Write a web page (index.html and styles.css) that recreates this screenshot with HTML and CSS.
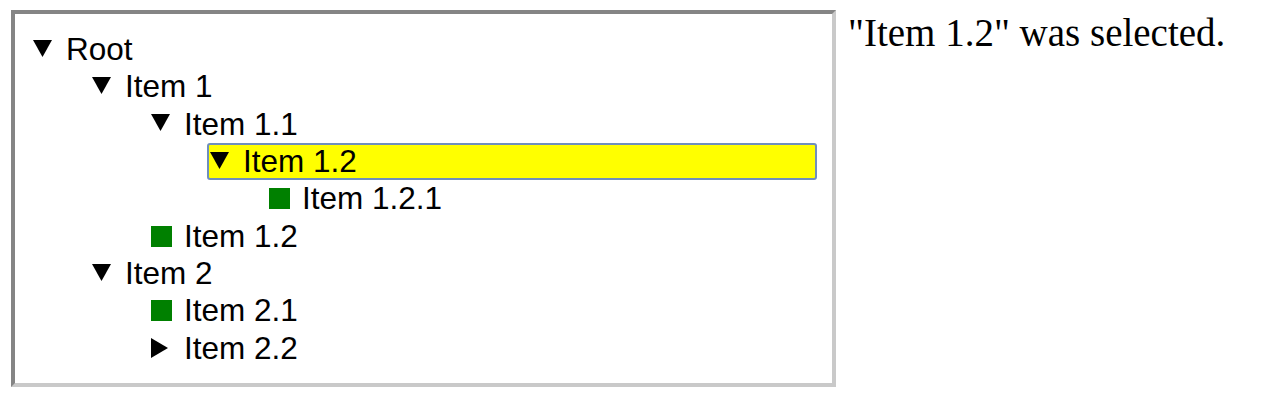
FILE: index.html
```html
<!DOCTYPE html>
<html>
<head>
<meta charset="utf-8">
<link rel="stylesheet" href="styles.css">
</head>
<body>
<div class="page">
  <div class="tree">
    <div class="row l0"><span class="icon"><svg class="down" width="19" height="17" viewBox="0 0 19 17"><polygon points="0,0 19,0 9.5,17"/></svg></span><span class="label">Root</span></div>
    <div class="row l1"><span class="icon"><svg class="down" width="19" height="17" viewBox="0 0 19 17"><polygon points="0,0 19,0 9.5,17"/></svg></span><span class="label">Item 1</span></div>
    <div class="row l2"><span class="icon"><svg class="down" width="19" height="17" viewBox="0 0 19 17"><polygon points="0,0 19,0 9.5,17"/></svg></span><span class="label">Item 1.1</span></div>
    <div class="row l3 selected"><span class="icon"><svg class="down" width="19" height="17" viewBox="0 0 19 17"><polygon points="0,0 19,0 9.5,17"/></svg></span><span class="label">Item 1.2</span></div>
    <div class="row l4"><span class="icon"><span class="leaf"></span></span><span class="label">Item 1.2.1</span></div>
    <div class="row l2"><span class="icon"><span class="leaf"></span></span><span class="label">Item 1.2</span></div>
    <div class="row l1"><span class="icon"><svg class="down" width="19" height="17" viewBox="0 0 19 17"><polygon points="0,0 19,0 9.5,17"/></svg></span><span class="label">Item 2</span></div>
    <div class="row l2"><span class="icon"><span class="leaf"></span></span><span class="label">Item 2.1</span></div>
    <div class="row l2"><span class="icon"><svg class="right" width="17" height="20" viewBox="0 0 17 20"><polygon points="0,0 17,10 0,20"/></svg></span><span class="label">Item 2.2</span></div>
  </div>
  <div class="status">"Item 1.2" was selected.</div>
</div>
</body>
</html>
```

FILE: styles.css
```css
html, body {
  margin: 0;
  padding: 0;
  background: #ffffff;
}

body {
  padding: 10px 0 0 11px;
}

.page {
  display: flex;
  align-items: flex-start;
  gap: 12px;
}

.tree {
  box-sizing: border-box;
  width: 825px;
  height: 377px;
  flex: none;
  border: 4px solid;
  border-color: #858585 #c9c9c9 #c9c9c9 #858585;
  padding: 17px 15px 16px 15px;
  font-family: "Liberation Sans", Arial, sans-serif;
  font-size: 31.5px;
  color: #000;
}

.row {
  box-sizing: border-box;
  height: 37.33px;
  display: flex;
  align-items: center;
  border: 2px solid transparent;
  border-radius: 3px;
  padding-left: 0;
}

.l0 { margin-left: 0; }
.l1 { margin-left: 59px; }
.l2 { margin-left: 118px; }
.l3 { margin-left: 177px; }
.l4 { margin-left: 236px; }

.selected {
  background: #ffff00;
  border-color: #6f8fbd;
}

.icon {
  width: 35px;
  flex: none;
  display: flex;
  align-items: center;
  padding-left: 1px;
  box-sizing: border-box;
}

.icon svg {
  display: block;
  flex: none;
  fill: #000;
}

.down {
  margin-top: -3px;
}

.leaf {
  display: block;
  flex: none;
  width: 21px;
  height: 21px;
  background: #008000;
}

.label {
  white-space: nowrap;
  line-height: 1;
  margin-left: -1px;
}

.status {
  font-family: "Liberation Serif", "Times New Roman", serif;
  font-size: 39px;
  margin-top: 0;
  color: #000;
  white-space: nowrap;
}
```
